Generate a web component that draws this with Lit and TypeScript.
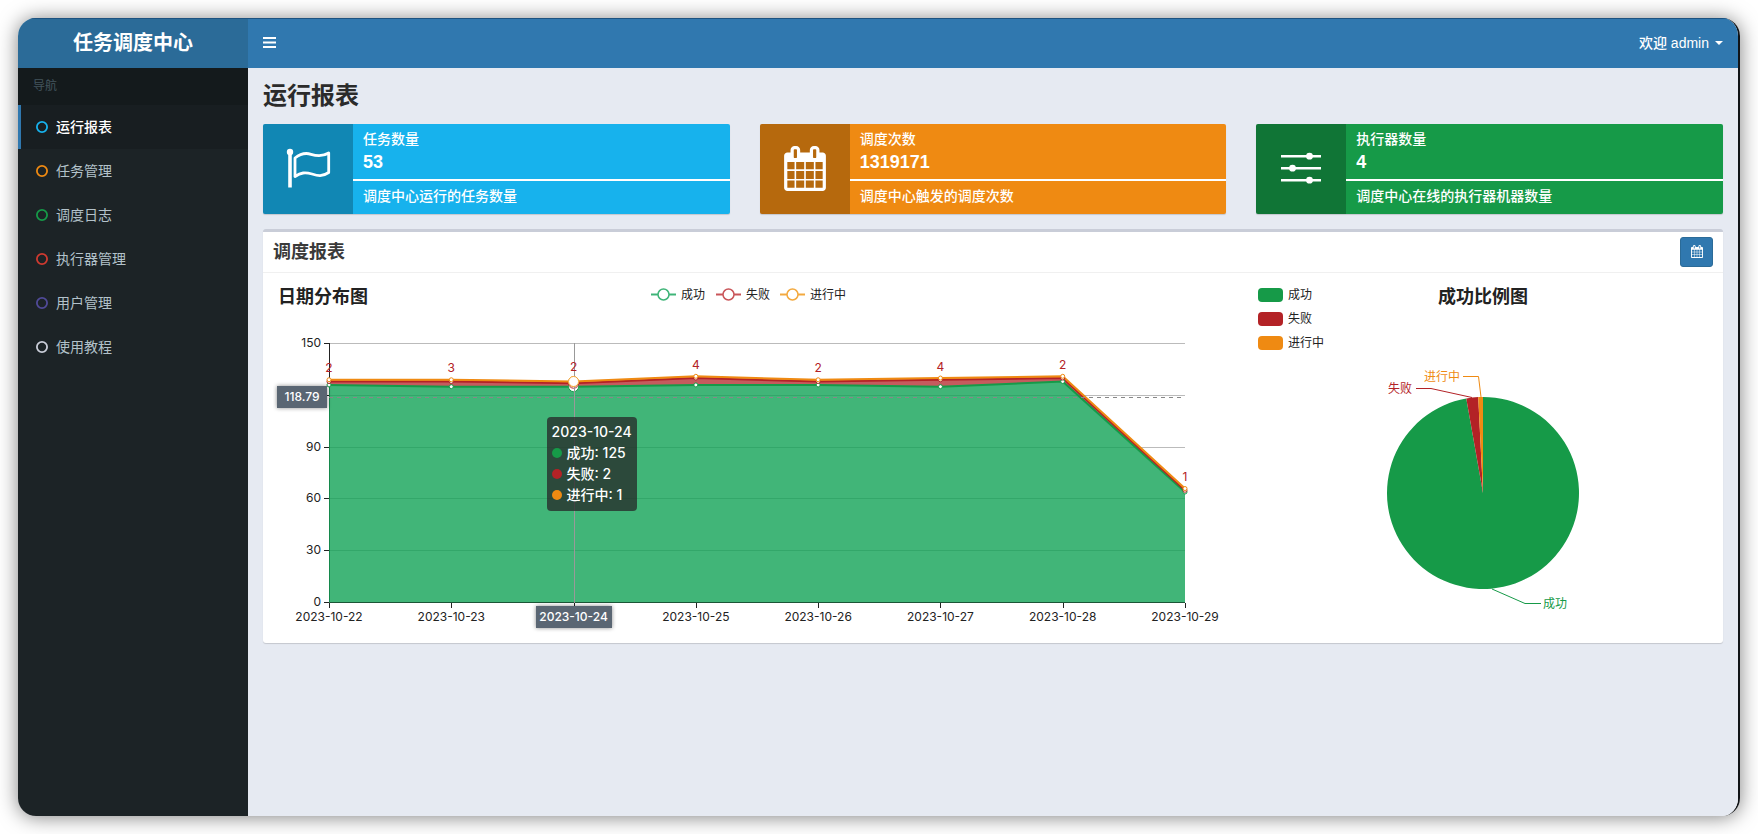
import { LitElement, html, svg, css } from "lit";
import { customElement, property } from "lit/decorators.js";
import { classMap } from "lit/directives/class-map.js";

const GREEN = "#169a48";
const RED = "#b32226";
const ORANGE = "#ef8a12";

const CALENDAR_PATH =
  "M128 1664h288v-288h-288v288zm352 0h320v-288h-320v288zm-352-352h288v-320h-288v320zm352 0h320v-320h-320v320zm-352-384h288v-288h-288v288zm736 736h320v-288h-320v288zm-384-736h320v-288h-320v288zm768 736h288v-288h-288v288zm-384-352h320v-320h-320v320zm-352-864v-288q0-13-9.5-22.5t-22.5-9.5h-64q-13 0-22.5 9.5t-9.5 22.5v288q0 13 9.5 22.5t22.5 9.5h64q13 0 22.5-9.5t9.5-22.5zm736 864h288v-320h-288v320zm-384-384h320v-288h-320v288zm384 0h288v-288h-288v288zm32-480v-288q0-13-9.5-22.5t-22.5-9.5h-64q-13 0-22.5 9.5t-9.5 22.5v288q0 13 9.5 22.5t22.5 9.5h64q13 0 22.5-9.5t9.5-22.5zm384-64v1280q0 52-38 90t-90 38h-1408q-52 0-90-38t-38-90v-1280q0-52 38-90t90-38h128v-96q0-66 47-113t113-47h64q66 0 113 47t47 113v96h384v-96q0-66 47-113t113-47h64q66 0 113 47t47 113v96h128q52 0 90 38t38 90z";

/* ---------- date distribution chart ---------- */

const DATES = [
  "2023-10-22", "2023-10-23", "2023-10-24", "2023-10-25",
  "2023-10-26", "2023-10-27", "2023-10-28", "2023-10-29",
];
const SUCCESS = [126, 125, 125, 126, 126, 125, 128, 64];
const FAIL = [2, 3, 2, 4, 2, 4, 2, 1];
const RUNNING = [1, 1, 1, 1, 1, 1, 1, 1];

@customElement("line-chart")
export class LineChart extends LitElement {
  @property({ type: Number }) active = 2;

  static styles = css`
    :host { display: block; position: relative; }
    svg { display: block; width: 100%; height: auto; }
    text { font-family: Inter, "Noto Sans CJK SC", sans-serif; font-size: 12px; fill: #222; }
    .title { font-size: 18px; font-weight: 700; }
    .mid { text-anchor: middle; }
    .end { text-anchor: end; }
    .count { fill: #b32226; }
    .pointer { fill: #fff; font-weight: 500; }
    .badge { fill: #5a6673; filter: drop-shadow(0 0 2px rgba(0, 0, 0, 0.45)); }
    .tooltip {
      position: absolute;
      left: 28.8%;
      top: 134px;
      padding: 4px 5px 6px;
      border-radius: 4px;
      background: rgba(38, 37, 39, 0.75);
      color: #fff;
      font: 500 14px/21px Inter, "Noto Sans CJK SC", sans-serif;
      white-space: nowrap;
    }
    .row { display: flex; align-items: center; gap: 5px; }
    .dot { width: 10px; height: 10px; border-radius: 50%; }
    .dot.ok { background: #169a48; }
    .dot.bad { background: #b32226; }
    .dot.run { background: #ef8a12; }
  `;

  private x(i: number) {
    return 56 + (i * 856) / 7;
  }
  private y(v: number) {
    return 319.5 - (v * 259) / 150;
  }

  render() {
    const totals = [
      SUCCESS,
      SUCCESS.map((v, i) => v + FAIL[i]),
      SUCCESS.map((v, i) => v + FAIL[i] + RUNNING[i]),
    ];
    const pts = (a: number[]) => a.map((v, i) => `${this.x(i)},${this.y(v)}`);
    const zero = DATES.map((_, i) => `${this.x(i)},${this.y(0)}`);
    const bases = [zero, pts(totals[0]), pts(totals[1])];
    const colors = [GREEN, RED, ORANGE];
    const fills = ["rgb(17,162,86)", "rgb(183,50,54)", "rgb(239,150,40)"];
    const legend = [
      { name: "成功", x: 378, c: "#3fb478" },
      { name: "失败", x: 443, c: "#c95559" },
      { name: "进行中", x: 507, c: "#f3a93f" },
    ];
    const ax = Math.round(this.x(this.active)) + 0.5;
    const a = this.active;
    return html`
      <svg viewBox="0 0 950 350" role="img" aria-label="日期分布图">
        <text class="title" x="5" y="20">日期分布图</text>
        ${legend.map(
          (l) => svg`
            <line x1=${l.x} y1="11.5" x2=${l.x + 25} y2="11.5" stroke=${l.c} stroke-width="2"></line>
            <circle cx=${l.x + 12.5} cy="11.5" r="5.5" fill="#fff" stroke=${l.c} stroke-width="1.5"></circle>
            <text x=${l.x + 30} y="16">${l.name}</text>`
        )}
        ${[30, 60, 90, 120, 150].map(
          (v) => svg`<line x1="56" x2="912" y1=${Math.floor(this.y(v)) + 0.5} y2=${Math.floor(this.y(v)) + 0.5} stroke="#bbb"></line>`
        )}
        <path d="M56.5 60V319.5H912" fill="none" stroke="#222"></path>
        ${[0, 30, 60, 90, 120, 150].map(
          (v) => svg`
            <line x1="51" x2="56" y1=${Math.floor(this.y(v)) + 0.5} y2=${Math.floor(this.y(v)) + 0.5} stroke="#222"></line>
            ${v === 120 ? "" : svg`<text class="end" x="48" y=${Math.floor(this.y(v)) + 4}>${v}</text>`}`
        )}
        ${DATES.map(
          (d, i) => svg`
            <line x1=${Math.round(this.x(i)) + 0.5} x2=${Math.round(this.x(i)) + 0.5} y1="320" y2="325" stroke="#222"></line>
            ${i === a ? "" : svg`<text class="mid" x=${this.x(i)} y="338">${d}</text>`}`
        )}
        ${totals.map(
          (t, k) => svg`<polygon points=${[...pts(t), ...bases[k].slice().reverse()].join(" ")} fill=${fills[k]} fill-opacity="0.8"></polygon>`
        )}
        ${totals.map(
          (t, k) => svg`
            <polyline points=${pts(t).join(" ")} fill="none" stroke=${colors[k]} stroke-width="2" stroke-linejoin="bevel"></polyline>`
        )}
        <line x1="56" x2="912" y1="114.5" y2="114.5" stroke="#888" stroke-dasharray="4 4"></line>
        ${totals.map((t, k) =>
          t.map(
            (v, i) => svg`<circle cx=${this.x(i)} cy=${this.y(v)} r=${i === a ? 5 : 2} fill="#fff" stroke=${colors[k]} stroke-width="1"></circle>`
          )
        )}
        <line x1=${ax} x2=${ax} y1="60" y2="320" stroke="#999"></line>
        <circle cx=${this.x(a)} cy=${this.y(totals[2][a])} r="5" fill="#fff" stroke="#f3a93f" stroke-width="1"></circle>
        ${FAIL.map(
          (v, i) => svg`<text class="mid count" x=${this.x(i)} y=${Math.round(this.y(totals[1][i])) - (i === a ? 12 : 9)}>${v}</text>`
        )}
        <rect class="badge" x="4" y="103" width="50" height="22"></rect>
        <text class="mid pointer" x="29" y="118">118.79</text>
        <rect class="badge" x=${Math.round(this.x(a)) - 38} y="323" width="76" height="22"></rect>
        <text class="mid pointer" x=${this.x(a)} y="338">${DATES[a]}</text>
      </svg>
      <div class="tooltip">
        <div>${DATES[a]}</div>
        <div class="row"><span class="dot ok"></span>成功: ${SUCCESS[a]}</div>
        <div class="row"><span class="dot bad"></span>失败: ${FAIL[a]}</div>
        <div class="row"><span class="dot run"></span>进行中: ${RUNNING[a]}</div>
      </div>
    `;
  }
}

/* ---------- success ratio chart ---------- */

@customElement("pie-chart")
export class PieChart extends LitElement {
  static styles = css`
    :host { display: block; }
    svg { display: block; width: 100%; height: auto; }
    text { font-family: Inter, "Noto Sans CJK SC", sans-serif; font-size: 12px; fill: #222; }
    .title { font-size: 18px; font-weight: 700; text-anchor: middle; }
    .ok { fill: #169a48; }
    .bad { fill: #b32226; text-anchor: end; }
    .run { fill: #ef8a12; text-anchor: end; }
  `;

  private slice(from: number, to: number, color: string) {
    const r = 96;
    const p = (t: number) => `${230 + r * Math.sin(t)} ${210 - r * Math.cos(t)}`;
    return svg`<path d="M230 210L${p(from)}A${r} ${r} 0 ${to - from > Math.PI ? 1 : 0} 1 ${p(to)}Z" fill=${color}></path>`;
  }

  render() {
    const full = Math.PI * 2;
    const legend = [["成功", GREEN], ["失败", RED], ["进行中", ORANGE]];
    return html`
      <svg viewBox="0 0 460 350" role="img" aria-label="成功比例图">
        ${legend.map(
          ([name, c], i) => svg`
            <rect x="5" y=${5 + i * 24} width="25" height="14" rx="4" fill=${c}></rect>
            <text x="35" y=${16 + i * 24}>${name}</text>`
        )}
        <text class="title" x="230" y="20">成功比例图</text>
        ${this.slice(0, full - 0.175, GREEN)}
        ${this.slice(full - 0.175, full - 0.05, RED)}
        ${this.slice(full - 0.05, full, ORANGE)}
        <path d="M210 93.5H225.5L228 114" fill="none" stroke=${ORANGE}></path>
        <path d="M163 105.5H178L219 114.5" fill="none" stroke=${RED}></path>
        <path d="M239 306L272 320.5H288" fill="none" stroke=${GREEN}></path>
        <text class="run" x="207" y="98">进行中</text>
        <text class="bad" x="159" y="110">失败</text>
        <text class="ok" x="290" y="325">成功</text>
      </svg>
    `;
  }
}

/* ---------- statistic card ---------- */

@customElement("info-box")
export class InfoBox extends LitElement {
  @property() tone = "aqua";
  @property() label = "";
  @property() value = "";
  @property() note = "";

  static styles = css`
    :host { display: block; min-width: 0; }
    .box {
      display: flex;
      min-height: 90px;
      border-radius: 2px;
      overflow: hidden;
      color: #fff;
      box-shadow: 0 1px 1px rgba(0, 0, 0, 0.15);
    }
    .aqua { background: #17b2ed; }
    .yellow { background: #ef8a12; }
    .green { background: #169a48; }
    .icon {
      box-sizing: border-box;
      flex: none;
      width: 90px;
      padding-bottom: 2px;
      display: flex;
      align-items: center;
      justify-content: center;
      background: rgba(0, 0, 0, 0.24);
    }
    .body { flex: 1; padding: 5px 10px; font-size: 14px; line-height: 20px; min-width: 0; font-weight: 500; }
    .value { display: block; font-size: 18px; line-height: 26px; font-weight: 700; }
    .bar { height: 2px; margin: 4px -10px 5px; background: #fff; }
  `;

  private icon() {
    if (this.tone === "aqua")
      return svg`<svg width="46" height="46" viewBox="0 0 46 46" fill="none" stroke="#fff">
        <circle cx="5" cy="7" r="3.2" fill="#fff" stroke="none"></circle>
        <path d="M5 6V42.500" stroke-width="3.6"></path>
        <path d="M10 13C15 9 20 7.300 26 9.300C33 11.500 38 11.500 43.700 8V27.500C37 32 33 31 27 29C20 27 16 27.500 10 31.500Z" stroke-width="2.8" stroke-linejoin="round"></path>
      </svg>`;
    if (this.tone === "yellow")
      return svg`<svg width="42" height="45" viewBox="0 0 1664 1792" fill="#fff"><path d=${CALENDAR_PATH}></path></svg>`;
    return svg`<svg width="40" height="32" viewBox="0 0 40 32" fill="#fff">
      <path d="M0 3h40v2.500H0zM0 15h40v2.500H0zM0 27h40v2.500H0z"></path>
      <circle cx="28.5" cy="4.2" r="3.4"></circle>
      <circle cx="11.5" cy="16.2" r="3.4"></circle>
      <circle cx="28.5" cy="28.2" r="3.4"></circle>
    </svg>`;
  }

  render() {
    return html`
      <div class=${classMap({ box: true, [this.tone]: true })}>
        <div class="icon">${this.icon()}</div>
        <div class="body">
          <div>${this.label}</div>
          <span class="value">${this.value}</span>
          <div class="bar"></div>
          <div>${this.note}</div>
        </div>
      </div>
    `;
  }
}

/* ---------- page ---------- */

const MENU = [
  { name: "运行报表", color: "#17b2ed", active: true },
  { name: "任务管理", color: "#ef8a12" },
  { name: "调度日志", color: "#169a48" },
  { name: "执行器管理", color: "#cf3a30" },
  { name: "用户管理", color: "#504a98" },
  { name: "使用教程", color: "#c9cdd8" },
];

@customElement("app-root")
export class AppRoot extends LitElement {
  static styles = css`
    :host {
      display: flex;
      box-sizing: border-box;
      min-height: 100vh;
      padding: 18px;
      background: #fff;
      font-family: "Liberation Sans", "Noto Sans CJK SC", sans-serif;
      font-size: 14px;
      line-height: 20px;
      color: #2b2b2b;
    }
    *, *::before { box-sizing: border-box; }
    .window {
      flex: 1;
      min-width: 0;
      display: grid;
      grid-template-columns: 230px minmax(0, 1fr);
      grid-template-rows: 50px 1fr;
      border-right: 2px solid #111417;
      border-radius: 18px;
      overflow: hidden;
      box-shadow: 0 1px 20px rgba(0, 0, 0, 0.5);
    }
    .logo, .topbar { box-shadow: inset 0 1px 0 #1c5280; }
    .logo {
      display: flex;
      align-items: center;
      justify-content: center;
      background: #2b6b98;
      color: #fff;
      font-size: 20px;
      font-weight: 700;
      text-decoration: none;
    }
    .topbar {
      display: flex;
      align-items: center;
      justify-content: space-between;
      padding: 0 15px;
      background: #3078af;
    }
    button { font: inherit; color: #fff; border: 0; background: none; padding: 0; cursor: pointer; }
    .toggle { display: flex; }
    .user { display: flex; align-items: center; gap: 6px; font-weight: 500; }
    .caret { border: 4px solid transparent; border-top-color: #fff; border-bottom: 0; }
    .side { background: #1c2326; }
    .side h2 {
      margin: 0;
      padding: 8px 15px 9px;
      font-size: 12px;
      font-weight: 400;
      background: #141a1c;
      color: #43545d;
    }
    .side ul { list-style: none; margin: 0; padding: 0; }
    .item {
      display: flex;
      align-items: center;
      gap: 8px;
      height: 44px;
      padding: 0 15px;
      border-left: 3px solid transparent;
      color: #b3c2ca;
      text-decoration: none;
    }
    .item.active { background: #181e21; border-left-color: #3078af; color: #fff; font-weight: 500; }
    .content { background: #e6eaf2; padding: 15px; }
    h1 { margin: 0 0 15px; font-size: 24px; line-height: 26px; font-weight: 700; }
    .stats { display: grid; grid-template-columns: repeat(3, minmax(0, 1fr)); gap: 30px; margin-bottom: 15px; }
    .panel {
      background: #fff;
      border-top: 3px solid #c9cdd8;
      border-radius: 3px;
      box-shadow: 0 1px 1px rgba(0, 0, 0, 0.15);
    }
    .head {
      display: flex;
      align-items: center;
      justify-content: space-between;
      height: 41px;
      padding: 0 10px 1px;
      border-bottom: 1px solid #f0f0f0;
    }
    h3 { margin: 0; font-size: 18px; line-height: 20px; font-weight: 700; color: #3a3a3a; }
    .range {
      display: flex;
      align-items: center;
      justify-content: center;
      width: 33px;
      height: 30px;
      border: 1px solid #2b6b98;
      border-radius: 3px;
      background: #3078af;
    }
    .charts { display: grid; grid-template-columns: 2fr 1fr; margin: 0 -5px; padding: 10px 0; }
    .charts > * { min-width: 0; margin: 0 15px; }
  `;

  render() {
    return html`
      <div class="window">
        <a class="logo" href="#">任务调度中心</a>
        <header class="topbar">
          <button class="toggle" aria-label="切换导航">
            <svg width="13" height="12" viewBox="0 0 13 12" fill="#fff">
              <path d="M0 0h13v2H0zM0 4.500h13v2H0zM0 9h13v2H0z"></path>
            </svg>
          </button>
          <button class="user">欢迎 admin <span class="caret"></span></button>
        </header>
        <nav class="side">
          <h2>导航</h2>
          <ul>
            ${MENU.map(
              (m) => html`<li>
                <a class=${classMap({ item: true, active: !!m.active })} href="#">
                  <svg width="12" height="12" viewBox="0 0 12 12">
                    <circle cx="6" cy="6" r="5.1" fill="none" stroke=${m.color} stroke-width="1.8"></circle>
                  </svg>
                  ${m.name}
                </a>
              </li>`
            )}
          </ul>
        </nav>
        <main class="content">
          <h1>运行报表</h1>
          <div class="stats">
            <info-box tone="aqua" label="任务数量" value="53" note="调度中心运行的任务数量"></info-box>
            <info-box tone="yellow" label="调度次数" value="1319171" note="调度中心触发的调度次数"></info-box>
            <info-box tone="green" label="执行器数量" value="4" note="调度中心在线的执行器机器数量"></info-box>
          </div>
          <section class="panel">
            <div class="head">
              <h3>调度报表</h3>
              <button class="range" aria-label="选择日期范围">
                <svg width="12" height="13" viewBox="0 0 1664 1792" fill="#fff"><path d=${CALENDAR_PATH}></path></svg>
              </button>
            </div>
            <div class="charts">
              <line-chart></line-chart>
              <pie-chart></pie-chart>
            </div>
          </section>
        </main>
      </div>
    `;
  }
}
